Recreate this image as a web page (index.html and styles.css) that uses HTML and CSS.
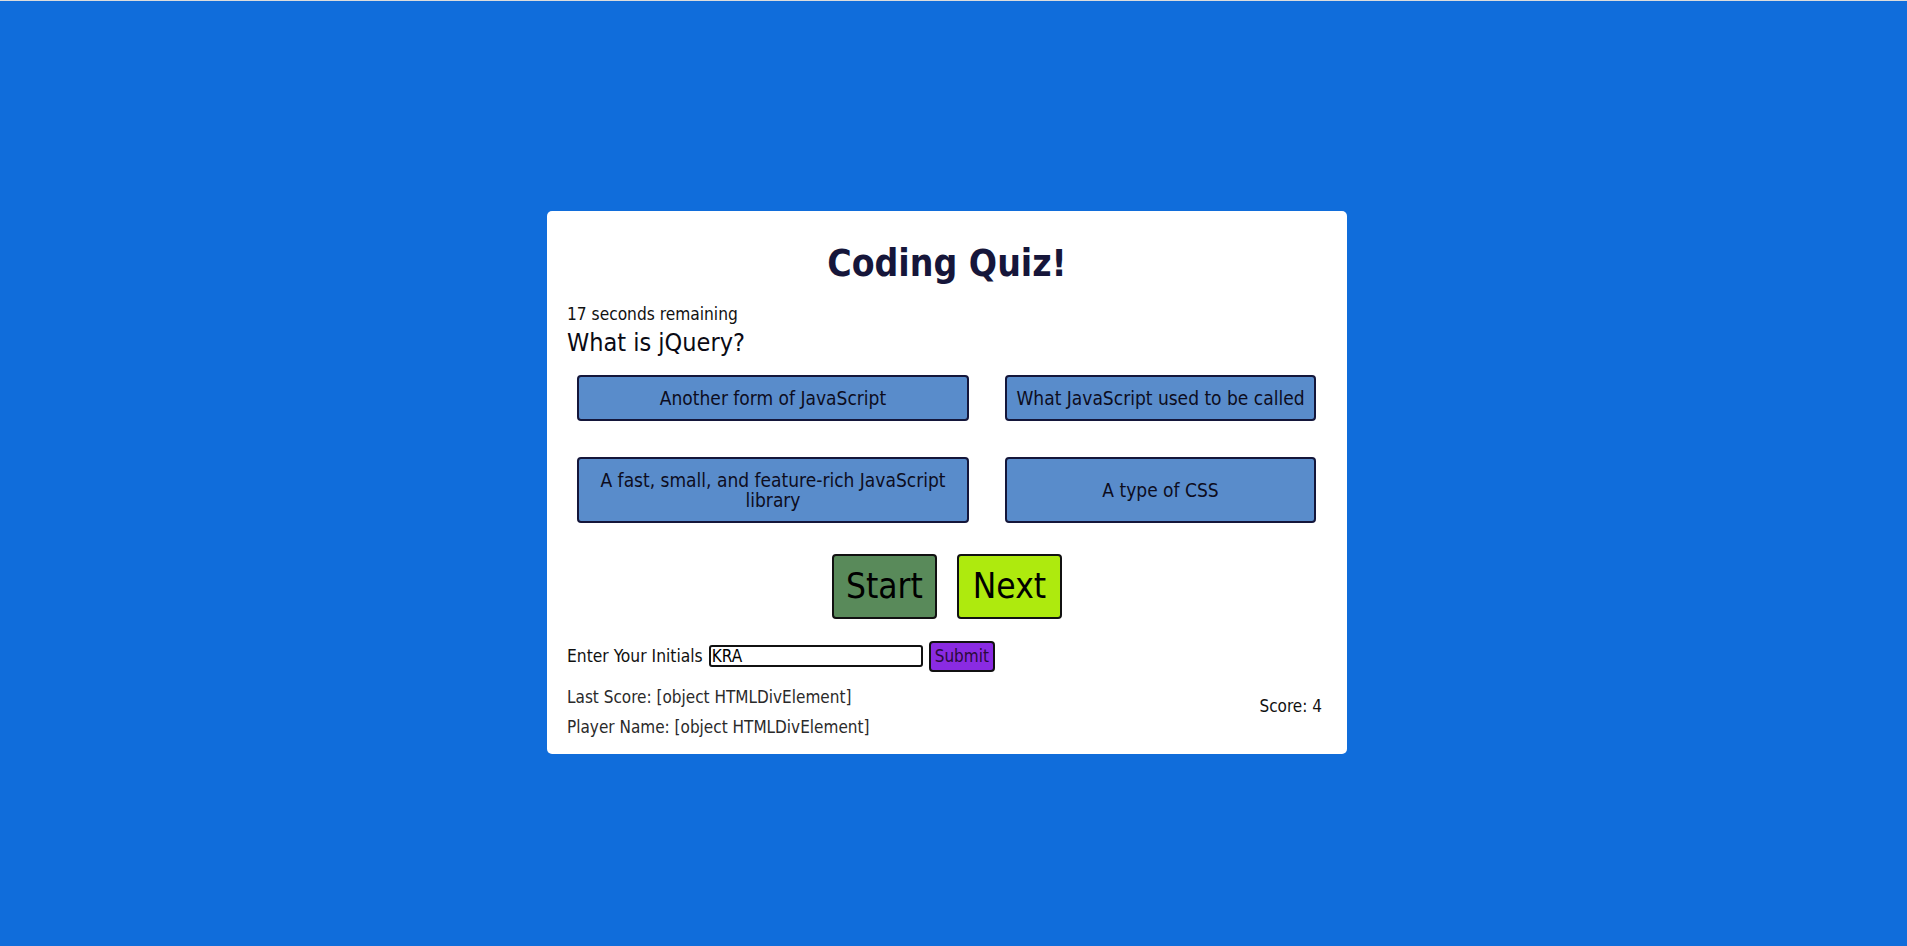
FILE: index.html
```html
<!DOCTYPE html>
<html lang="en">
<head>
<meta charset="utf-8">
<title>Coding Quiz</title>
<link rel="stylesheet" href="styles.css">
</head>
<body>
<main class="page">
  <section class="card">
    <h1 class="title">Coding Quiz!</h1>
    <div class="timer">17 seconds remaining</div>
    <div class="question">What is jQuery?</div>
    <div class="answers">
      <button class="answer">Another form of JavaScript</button>
      <button class="answer">What JavaScript used to be called</button>
      <button class="answer">A fast, small, and feature-rich JavaScript library</button>
      <button class="answer">A type of CSS</button>
    </div>
    <div class="controls">
      <button class="big start">Start</button>
      <button class="big next">Next</button>
    </div>
    <div class="initials">
      <label class="initials-label" for="ini">Enter Your Initials</label>
      <input id="ini" class="initials-input" type="text" value="KRA">
      <button class="submit">Submit</button>
    </div>
    <div class="footer">
      <div class="history">
        <p class="line">Last Score: [object HTMLDivElement]</p>
        <p class="line">Player Name: [object HTMLDivElement]</p>
      </div>
      <div class="score">Score: 4</div>
    </div>
  </section>
</main>
</body>
</html>
```
FILE: styles.css
```css
html, body {
  margin: 0;
  padding: 0;
}
body {
  background: #106ddb;
  border-top: 1px solid #dcdcdc;
  min-height: 945px;
  font-family: "DejaVu Sans Condensed", "DejaVu Sans", sans-serif;
  font-stretch: condensed;
  color: #000;
}
.page {
  display: flex;
  justify-content: center;
  padding-top: 210px;
  padding-right: 13px;
}
.card {
  box-sizing: border-box;
  width: 800px;
  background: #fff;
  border-radius: 5px;
  padding: 31px 20px 17px 20px;
}
.title {
  margin: 0;
  text-align: center;
  font-size: 37px;
  font-weight: bold;
  color: #16163a;
}
.timer {
  margin-top: 19px;
  font-size: 17.2px;
  color: #111;
}
.question {
  margin-top: 4px;
  font-size: 25px;
  color: #0a0a14;
}
.answers {
  display: grid;
  grid-template-columns: 392px 311px;
  column-gap: 36px;
  row-gap: 36px;
  margin: 18px 10px 0 10px;
}
.answer {
  display: flex;
  align-items: center;
  justify-content: center;
  text-align: center;
  font-family: inherit;
  font-stretch: condensed;
  font-size: 19px;
  color: #0d0d1e;
  background: #598ccb;
  border: 2px solid #14163a;
  border-radius: 4px;
  padding: 11px 6px;
  margin: 0;
  line-height: 20px;
}
.controls {
  display: flex;
  justify-content: center;
  gap: 20px;
  margin-top: 31px;
}
.big {
  font-family: inherit;
  font-stretch: condensed;
  font-size: 35px;
  color: #000;
  border: 2px solid #111;
  border-radius: 4px;
  padding: 10px 12px;
  margin: 0;
  line-height: 1.164;
}
.start {
  background: #598a5a;
}
.next {
  background: #aeea0e;
  padding: 10px 14px;
}
.initials {
  display: flex;
  align-items: center;
  margin-top: 22px;
}
.initials-label {
  font-size: 17.3px;
  color: #111;
  margin-right: 6px;
}
.initials-input {
  box-sizing: border-box;
  width: 214px;
  height: 22px;
  border: 2px solid #111;
  border-radius: 3px;
  padding: 0 0 0 1px;
  font-family: inherit;
  font-stretch: condensed;
  font-size: 17px;
  color: #000;
  margin: 0 6px 0 0;
  outline: none;
}
.submit {
  font-family: inherit;
  font-stretch: condensed;
  font-size: 17px;
  color: #2a0a3a;
  background: #8a2be2;
  border: 2px solid #111;
  border-radius: 4px;
  padding: 3px 4px;
  margin: 0;
  line-height: 21px;
}
.footer {
  display: flex;
  justify-content: space-between;
  align-items: center;
  margin-top: 15px;
}
.history {
  display: flex;
  flex-direction: column;
  gap: 10px;
}
.line {
  margin: 0;
  font-size: 17px;
  color: #2a2a2a;
}
.score {
  font-size: 17px;
  color: #111;
  margin-right: 5px;
  margin-bottom: 12px;
}
```
